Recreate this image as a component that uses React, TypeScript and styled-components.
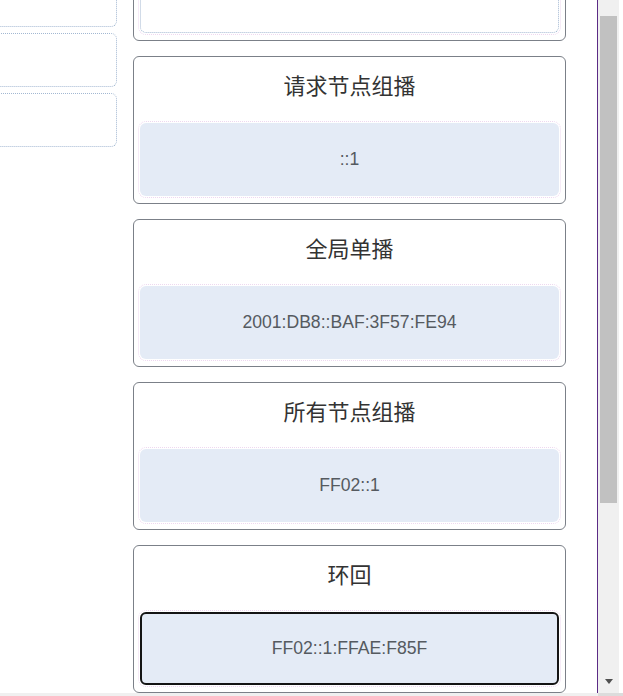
import React, { useLayoutEffect, useRef } from "react";
import styled, { createGlobalStyle } from "styled-components";

const Global = createGlobalStyle`
  html, body { margin: 0; padding: 0; background: #ffffff; overflow: hidden; }
  * { box-sizing: border-box; }
`;

const Viewport = styled.div`
  width: 623px;
  height: 696px;
  display: flex;
  flex-direction: column;
  overflow: hidden;
  background: #ffffff;
`;

const Upper = styled.div`
  display: flex;
  height: 693px;
  flex: none;
`;

const ScrollArea = styled.div`
  width: 598px;
  height: 100%;
  border-right: 1px solid #5b2b86;
  overflow: hidden;
  background: #ffffff;
`;

const Content = styled.div`
  display: flex;
  align-items: flex-start;
  gap: 16px;
  width: 680px;
  padding-right: 31px;
`;

const LeftCol = styled.div`
  width: 200px;
  flex: none;
  padding-top: 20px;
  display: flex;
  flex-direction: column;
  gap: 6px;
`;

const LeftCard = styled.div`
  height: 54px;
  border: 1px dotted #a3b8d2;
  border-radius: 6px;
  background: #ffffff;
`;

const RightCol = styled.div`
  width: 433px;
  flex: none;
  display: flex;
  flex-direction: column;
  gap: 15px;
`;

const Card = styled.section`
  height: 148px;
  border: 1px solid #7b8088;
  border-radius: 6px;
  padding: 6px 6px 7px;
  display: flex;
  flex-direction: column;
  background: #ffffff;
`;

const Title = styled.h3`
  margin: 0;
  height: 60px;
  padding: 8px 0 0;
  line-height: 26px;
  font-size: 22px;
  font-weight: 400;
  color: #333333;
  text-align: center;
  font-family: "Noto Sans CJK SC", "Liberation Sans", sans-serif;
`;

const ValueBox = styled.div<{ $focused?: boolean; $blank?: boolean }>`
  height: 73px;
  border-radius: 6px;
  display: flex;
  align-items: center;
  justify-content: center;
  background: ${(p) => (p.$blank ? "#ffffff" : "#e4ebf6")};
  border: ${(p) =>
    p.$focused
      ? "2px solid #141414"
      : p.$blank
      ? "1px dotted #a3b8d2"
      : "2px solid transparent"};
  outline: 1px dotted #eed8f0;
  outline-offset: 1px;
  color: #555a60;
  font-size: 17.6px;
  font-family: "Liberation Sans", Arial, sans-serif;
`;

const VScroll = styled.div`
  width: 21px;
  flex: none;
  height: 100%;
  background: #f0f0f0;
  display: flex;
  flex-direction: column;
  align-items: center;
`;

const Thumb = styled.div`
  margin-top: 16px;
  width: 17px;
  height: 487px;
  background: #c1c1c1;
`;

const DownArrow = styled.div`
  margin-top: auto;
  margin-bottom: 9px;
  width: 0;
  height: 0;
  border-left: 4.5px solid transparent;
  border-right: 4.5px solid transparent;
  border-top: 5px solid #505050;
`;

const Gutter = styled.div`
  flex: 1;
  background: #ffffff;
`;

const HBand = styled.div`
  display: flex;
  height: 3px;
  flex: none;
`;

const HTrack = styled.div`
  width: 598px;
  background: #f0f0f0;
`;

const HCorner = styled.div`
  flex: 1;
  background: #dcdcdc;
`;

type Addr = { id: string; title: string; value: string; focused?: boolean; blank?: boolean };

const addresses: Addr[] = [
  { id: "top", title: "", value: "", blank: true },
  { id: "snm", title: "请求节点组播", value: "::1" },
  { id: "gua", title: "全局单播", value: "2001:DB8::BAF:3F57:FE94" },
  { id: "anm", title: "所有节点组播", value: "FF02::1" },
  { id: "lo", title: "环回", value: "FF02::1:FFAE:F85F", focused: true },
];

export default function App() {
  const ref = useRef<HTMLDivElement>(null);
  useLayoutEffect(() => {
    if (ref.current) {
      ref.current.scrollTop = 107;
      ref.current.scrollLeft = 83;
    }
  }, []);

  return (
    <>
      <Global />
      <Viewport>
        <Upper>
          <ScrollArea ref={ref}>
            <Content>
              <LeftCol>
                {[0, 1, 2, 3].map((i) => (
                  <LeftCard key={i} />
                ))}
              </LeftCol>
              <RightCol>
                {addresses.map((a) => (
                  <Card key={a.id}>
                    <Title>{a.title}</Title>
                    <ValueBox $focused={a.focused} $blank={a.blank}>
                      {a.value}
                    </ValueBox>
                  </Card>
                ))}
              </RightCol>
            </Content>
          </ScrollArea>
          <VScroll>
            <Thumb />
            <DownArrow />
          </VScroll>
          <Gutter />
        </Upper>
        <HBand>
          <HTrack />
          <HCorner />
        </HBand>
      </Viewport>
    </>
  );
}
